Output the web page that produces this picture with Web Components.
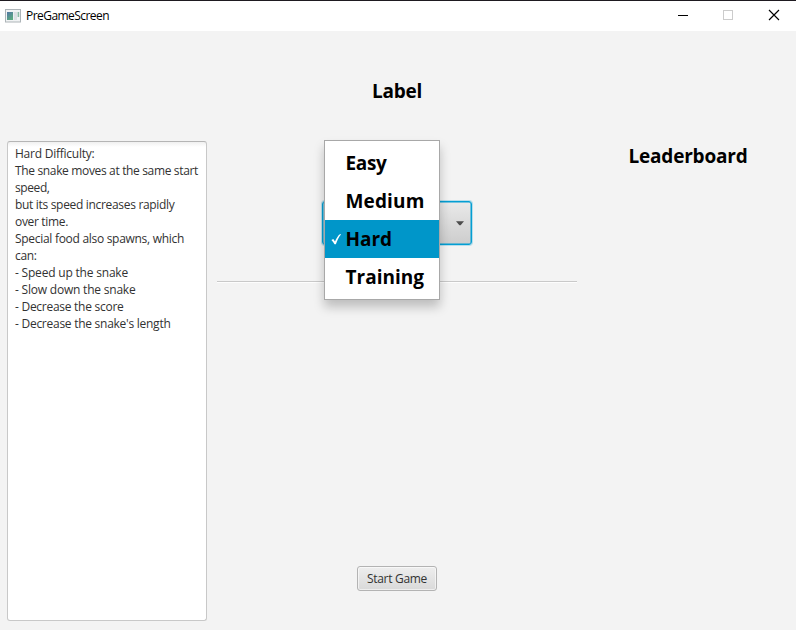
<!DOCTYPE html>
<html lang="en">
<head>
<meta charset="utf-8">
<title>PreGameScreen</title>
<style>
html, body { margin: 0; height: 100%; overflow: hidden; background: #f3f3f3; }
body { font-family: "Open Sans", "Noto Sans", sans-serif; }
</style>
</head>
<body>
<app-window></app-window>
<script>
const define = (name, html, init) => customElements.define(name, class extends HTMLElement {
  connectedCallback() {
    if (this.shadowRoot) return;
    const t = document.createElement('template');
    t.innerHTML = html;
    this.attachShadow({ mode: 'open' }).append(t.content.cloneNode(true));
    if (init) init(this);
  }
});

// A single line of text whose tracking is adjusted to a given width.
define('fit-text', `<style>:host{display:block;white-space:pre;width:max-content}span{display:inline-block}</style><span><slot></slot></span>`, el => {
  const width = parseFloat(el.getAttribute('w'));
  const span = el.shadowRoot.querySelector('span');
  const natural = span.getBoundingClientRect().width;
  const count = el.textContent.length;
  if (natural && width) span.style.letterSpacing = ((width - natural) / count) + 'px';
});

define('title-bar', `<style>
:host{display:flex;box-sizing:border-box;height:31px;border-top:1px solid #1e1a20;background:#fff;color:#000;align-items:center;font-size:12px;line-height:16px}
.app{margin:0 5px 1px 5px;flex:none}
fit-text{flex:none;margin-top:-1px}
.controls{margin-left:auto;display:flex;align-items:center}
.controls svg{display:block}
</style>
<svg class="app" width="16" height="14" viewBox="0 0 16 14"><defs><linearGradient id="g" x2=".6" y2="1"><stop stop-color="#5276a5"/><stop offset="1" stop-color="#5baa80"/></linearGradient></defs><rect x=".5" y=".5" width="15" height="12.5" fill="#f1f3f4" stroke="#adb4b8"/><rect x="2" y="3" width="6" height="8" fill="url(#g)"/><rect x="8.8" y="3" width="3.2" height="8" fill="#dbe0e3"/><rect x="12.6" y="3" width="1.6" height="5" fill="#8bbba5"/></svg>
<fit-text w="83">PreGameScreen</fit-text>
<div class="controls">
<svg width="136" height="30" viewBox="0 0 136 30" fill="none" shape-rendering="crispEdges"><path d="M18 14.5h10" stroke="#000" transform="translate(0 0)"/><path d="M63.5 9.5h9v9h-9z" stroke="#ccc"/><path d="M109 9l10 10M119 9l-10 10" stroke="#000" stroke-width="1.15" shape-rendering="auto"/></svg>
</div>`);

define('text-area', `<style>
:host{display:block;box-sizing:border-box;border:1px solid #c8c8c8;border-top-color:#b5b5b5;border-radius:3px;background:linear-gradient(#f0f0f0,#fff 5px);padding:3px 7px;color:#323232;font-size:12px;line-height:17px}
</style><slot></slot>`);

define('head-line', `<style>:host{display:flex;justify-content:center;font-weight:700;font-size:19px;line-height:28px;color:#000}</style><slot></slot>`);

define('combo-box', `<style>
:host{display:flex;box-sizing:border-box;width:150px;height:44px;border:1px solid #039ed3;border-radius:3px;background:linear-gradient(#e9e9e9,#cdcdcd);box-shadow:0 0 0 1px #039ed340,inset 0 0 0 .5px #039ed3;align-items:center;justify-content:flex-end;padding-right:7px}
svg{display:block}
</style><svg width="8" height="5" viewBox="0 0 8 5"><path d="M0 .3h8L4.6 4.2H3.4z" fill="#4d4d4d"/></svg>`);

define('menu-item', `<style>
:host{display:flex;height:38px;align-items:center;font-weight:700;font-size:19px;line-height:28px;color:#000;padding-left:6px}
:host([selected]){background:#0096c9}
svg{flex:none;width:11px;height:12px;margin-right:3.500px;visibility:hidden}
:host([selected]) svg{visibility:visible}
</style><svg viewBox="0 0 11 12"><path d="M.4 7.1 2.3 6 4 8.5C5.300 5.400 7 2.500 9.200 1l.8.5C7.700 4 6.200 7.700 4.900 11.300H3.500Q2.200 8.800.4 7.100z" fill="#fff"/></svg><slot></slot>`);

define('popup-menu', `<style>
:host{display:block;box-sizing:border-box;width:116px;height:160px;padding:3px 0;border:1px solid #a8a8a8;background:#fff;box-shadow:0 7px 10px rgba(0,0,0,.22)}
</style><slot></slot>`);

define('line-separator', `<style>:host{display:block;height:1px;background:#c9c9c9;border-bottom:1px solid #fdfdfd}</style>`);

define('push-button', `<style>
:host{display:flex;box-sizing:border-box;width:80px;height:25px;align-items:center;justify-content:center;border:1px solid #b3b3b3;border-radius:3px;background:linear-gradient(#eee,#d9d9d9);box-shadow:inset 0 0 0 1px #ffffff90;font-size:12px;line-height:17px;color:#323232}
</style><slot></slot>`);

define('app-window', `<style>
:host{display:grid;grid-template-rows:31px 1fr;width:796px;height:630px;background:#f3f3f3}
title-bar{width:796px}
main{display:grid;grid-template-columns:200px 360px 209px;column-gap:10px;padding-left:7px;box-sizing:border-box}
text-area{margin:110px 0 9px}
.centre{display:flex;flex-direction:column;align-items:center;padding-top:46px}
.picker{position:relative;margin-top:96px}
popup-menu{position:absolute;left:2px;top:-61px;z-index:2}
line-separator{align-self:stretch;margin-top:36px}
push-button{margin-top:auto;margin-bottom:39px}
.right{padding-top:111px;margin-left:-7px}
</style>
<title-bar></title-bar>
<main>
<text-area><fit-text w="79.500">Hard Difficulty:</fit-text><fit-text w="183">The snake moves at the same start</fit-text><fit-text w="34.500">speed,</fit-text><fit-text w="159.500">but its speed increases rapidly</fit-text><fit-text w="53">over time.</fit-text><fit-text w="169">Special food also spawns, which</fit-text><fit-text w="21.500">can:</fit-text><fit-text w="113">- Speed up the snake</fit-text><fit-text w="120.500">- Slow down the snake</fit-text><fit-text w="108.500">- Decrease the score</fit-text><fit-text w="155.500">- Decrease the snake's length</fit-text></text-area>
<section class="centre">
<head-line><fit-text w="50">Label</fit-text></head-line>
<div class="picker"><combo-box></combo-box>
<popup-menu><menu-item><fit-text w="41">Easy</fit-text></menu-item><menu-item><fit-text w="79">Medium</fit-text></menu-item><menu-item selected><fit-text w="46.500">Hard</fit-text></menu-item><menu-item><fit-text w="78.500">Training</fit-text></menu-item></popup-menu></div>
<line-separator></line-separator>
<push-button><fit-text w="60">Start Game</fit-text></push-button>
</section>
<section class="right"><head-line><fit-text w="119">Leaderboard</fit-text></head-line></section>
</main>`);
</script>
</body>
</html>
